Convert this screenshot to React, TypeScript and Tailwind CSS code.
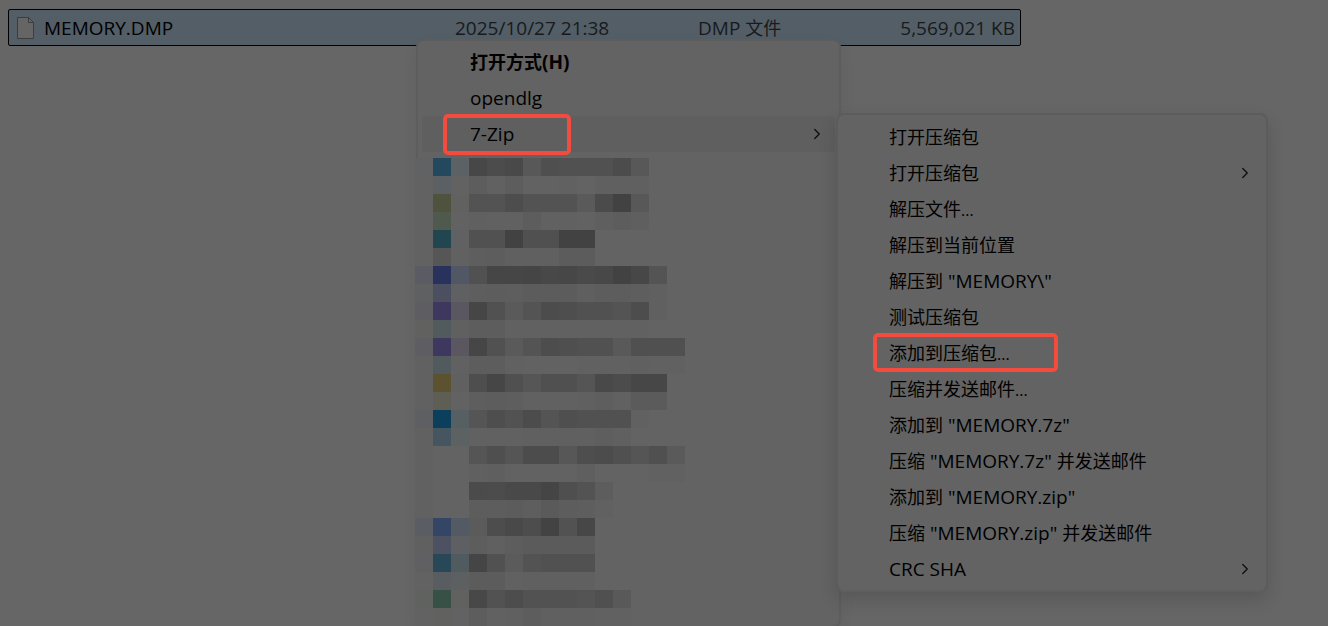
import { ChevronRight } from "lucide-react";

type MosaicRow = { icon: string; label: string };

// Each row lists three six-digit icon colours and then two-digit grey levels.
const mosaic: MosaicRow[] = [
  { icon: "606264 24485e 5b6165", label: "47 4c 49 58 4f 51 51 51 4c 58" },
  { icon: "626262 5b6064 626262", label: "5d 61 5d 62 62 61 63 60 60 60" },
  { icon: "626262 4f523d 616160", label: "53 53 4d 53 53 53 5a 4b 42 58" },
  { icon: "626262 4f594d 626262", label: "60 61 61 5d 61 61 62 5f 5d 5f" },
  { icon: "626262 21464f 5f6163", label: "51 51 42 50 50 42 42" },
  { icon: "626262 565656 616161", label: "5e 5d 60 60 60 5c 5c" },
  { icon: "5b5b64 28325d 515764", label: "51 46 46 45 48 47 4a 48 42 47 54" },
  { icon: "5f6061 4b4f60 5e6062", label: "5e 5d 5e 5c 5c 5c 5f 5d 5d 5e 60" },
  { icon: "5e5d62 3e385e 5a5761", label: "46 51 5a 54 4c 4e 51 51 54 4d 60" },
  { icon: "616160 515a5c 606060", label: "5d 5d 61 61 61 61 61 61 61 61" },
  { icon: "5e5d62 3e385e 5a5761", label: "46 51 5a 54 4d 4f 51 51 59 50 50 50" },
  { icon: "616161 515a5c 606160", label: "5d 5d 61 62 62 62 61 61 61 60 61 61" },
  { icon: "616161 5c522f 616060", label: "4e 46 50 56 50 50 55 49 4c 47 47" },
  { icon: "616161 5f5e55 626262", label: "5e 5d 5e 61 61 61 60 5e 61 5b 5b" },
  { icon: "5e5f62 0b3f5c 566063", label: "55 4e 52 4c 54 4f 51 51 51 61" },
  { icon: "606160 455660 5c6162", label: "61 61 61 60 60 60 60 5e 60" },
  { icon: "616161 636363 636363", label: "55 4f 55 4c 4c 57 4e 4c 50 55 50 5a" },
  { icon: "616161 636363 636363", label: "60 5f 62 62 62 62 5f 63 63 63 61 61" },
  { icon: "616161 636363 636363", label: "4b 4c 49 49 45 4f 53 5d" },
  { icon: "616161 636363 636363", label: "5d 5d 5c 5e 5a 5d 5e 61" },
  { icon: "5a5d63 344566 535a64", label: "5b 4d 49 4d 43 52 47" },
  { icon: "606061 4d5262 5e5f63", label: "5d 60 5d 5b 5b 5b 5b" },
  { icon: "606062 284858 505b60", label: "45 51 5b 53 51 51 51" },
  { icon: "626262 595d61 5c6060", label: "5c 5c 61 60 60 60 60" },
  { icon: "606260 375147 616160", label: "48 52 4d 52 52 52 54 50 59" },
  { icon: "626262 616160 626262", label: "5d 61 60 5d 60 60 60 61 61" },
];

const submenu: { label: string; arrow?: boolean; marked?: boolean }[] = [
  { label: "打开压缩包" },
  { label: "打开压缩包", arrow: true },
  { label: "解压文件..." },
  { label: "解压到当前位置" },
  { label: '解压到 "MEMORY\\"' },
  { label: "测试压缩包" },
  { label: "添加到压缩包...", marked: true },
  { label: "压缩并发送邮件..." },
  { label: '添加到 "MEMORY.7z"' },
  { label: '压缩 "MEMORY.7z" 并发送邮件' },
  { label: '添加到 "MEMORY.zip"' },
  { label: '压缩 "MEMORY.zip" 并发送邮件' },
  { label: "CRC SHA", arrow: true },
];

// Latin runs are set a little larger than the Chinese text, ellipses a little smaller.
function Mixed({ text }: { text: string }) {
  const parts = text.split(/([\u4e00-\u9fff]+|\.\.\.)/).filter(Boolean);
  return (
    <span className="whitespace-pre">
      {parts.map((part, i) => {
        const size =
          part === "..." ? "text-[16px]" : /[\u4e00-\u9fff]/.test(part) ? "text-[18px]" : "text-[19px]";
        return (
          <span key={i} className={`leading-6 ${size}`}>
            {part}
          </span>
        );
      })}
    </span>
  );
}

function Mosaic() {
  return (
    <div aria-hidden="true" className="-ml-[7px] mt-1.5">
      {mosaic.map((row, i) => {
        const colours = [
          ...row.icon.split(" ").map((c) => `#${c}`),
          ...row.label.split(" ").map((g) => `#${g}${g}${g}`),
        ];
        return (
          <div key={i} className="flex h-[18px]">
            {colours.map((c, j) => (
              <span key={j} className="w-[18px]" style={{ backgroundColor: c }} />
            ))}
          </div>
        );
      })}
    </div>
  );
}

function Arrow() {
  return <ChevronRight className="ml-auto size-[18px] text-[#101010]" strokeWidth={1.8} />;
}

export default function App() {
  return (
    <main className="relative h-screen overflow-hidden bg-[#666666] pl-2 pt-[9px] font-['Open_Sans','Noto_Sans_CJK_SC',sans-serif] text-[18px] leading-6 text-black">
      <table className="w-[1013px] table-fixed border-separate border-spacing-0 rounded-[2px] border border-black bg-[#535e67]">
        <tbody>
          <tr className="h-[35px] text-[#181a1c]">
            <td className="w-[446px] p-0 pl-2 text-black">
              <span className="flex items-center gap-[9px]">
                <svg viewBox="0 0 18 22" className="h-[22px] w-[18px]" aria-hidden="true">
                  <path d="M.5.5h11l5 5v16H.5z" fill="#656565" stroke="#3c3c3c" />
                  <path d="M11.5.5v5h5" fill="none" stroke="#3c3c3c" />
                </svg>
                <Mixed text="MEMORY.DMP" />
              </span>
            </td>
            <td className="w-[243px] p-0">
              <Mixed text="2025/10/27 21:38" />
            </td>
            <td className="p-0">
              <Mixed text="DMP 文件" />
            </td>
            <td className="p-0 pr-[5px] text-right">
              <Mixed text="5,569,021 KB" />
            </td>
          </tr>
        </tbody>
      </table>

      <div
        role="menu"
        className="absolute left-[416px] top-[39px] w-[425px] rounded-lg border-2 border-[#5d5d5d] bg-[#636363] px-1 pt-[3px] shadow-[0_6px_16px_rgba(0,0,0,0.06)]"
      >
        <button role="menuitem" className="flex h-9 w-full items-center pl-12 text-left font-bold">
          <Mixed text="打开方式(H)" />
        </button>
        <button role="menuitem" className="flex h-9 w-full items-center pl-12 text-left">
          <Mixed text="opendlg" />
        </button>
        <button
          role="menuitem"
          aria-haspopup="menu"
          aria-expanded="true"
          className="relative flex h-9 w-full items-center rounded bg-[#5f5f5f] pl-12 pr-[9px] text-left"
        >
          <Mixed text="7-Zip" />
          <Arrow />
          <span className="absolute -top-0.5 left-[21px] h-[41px] w-32 rounded-[5px] border-4 border-[#f34b3e]" />
        </button>
        <Mosaic />
      </div>

      <div
        role="menu"
        className="absolute left-[836px] top-[113px] w-[432px] rounded-lg border-2 border-[#5c5c5c] border-b-[#5f5f5f] bg-[#636363] pb-[3px] pl-[51px] pr-3 pt-1 shadow-[0_8px_18px_rgba(0,0,0,0.14)]"
      >
        {submenu.map((item, i) => (
          <button
            key={i}
            role="menuitem"
            aria-haspopup={item.arrow ? "menu" : undefined}
            className="relative flex h-9 w-full items-center text-left"
          >
            <Mixed text={item.label} />
            {item.arrow && <Arrow />}
            {item.marked && (
              <span className="absolute -left-4 -top-0.5 h-[39px] w-[185px] rounded-[5px] border-4 border-[#f34b3e]" />
            )}
          </button>
        ))}
      </div>
    </main>
  );
}
